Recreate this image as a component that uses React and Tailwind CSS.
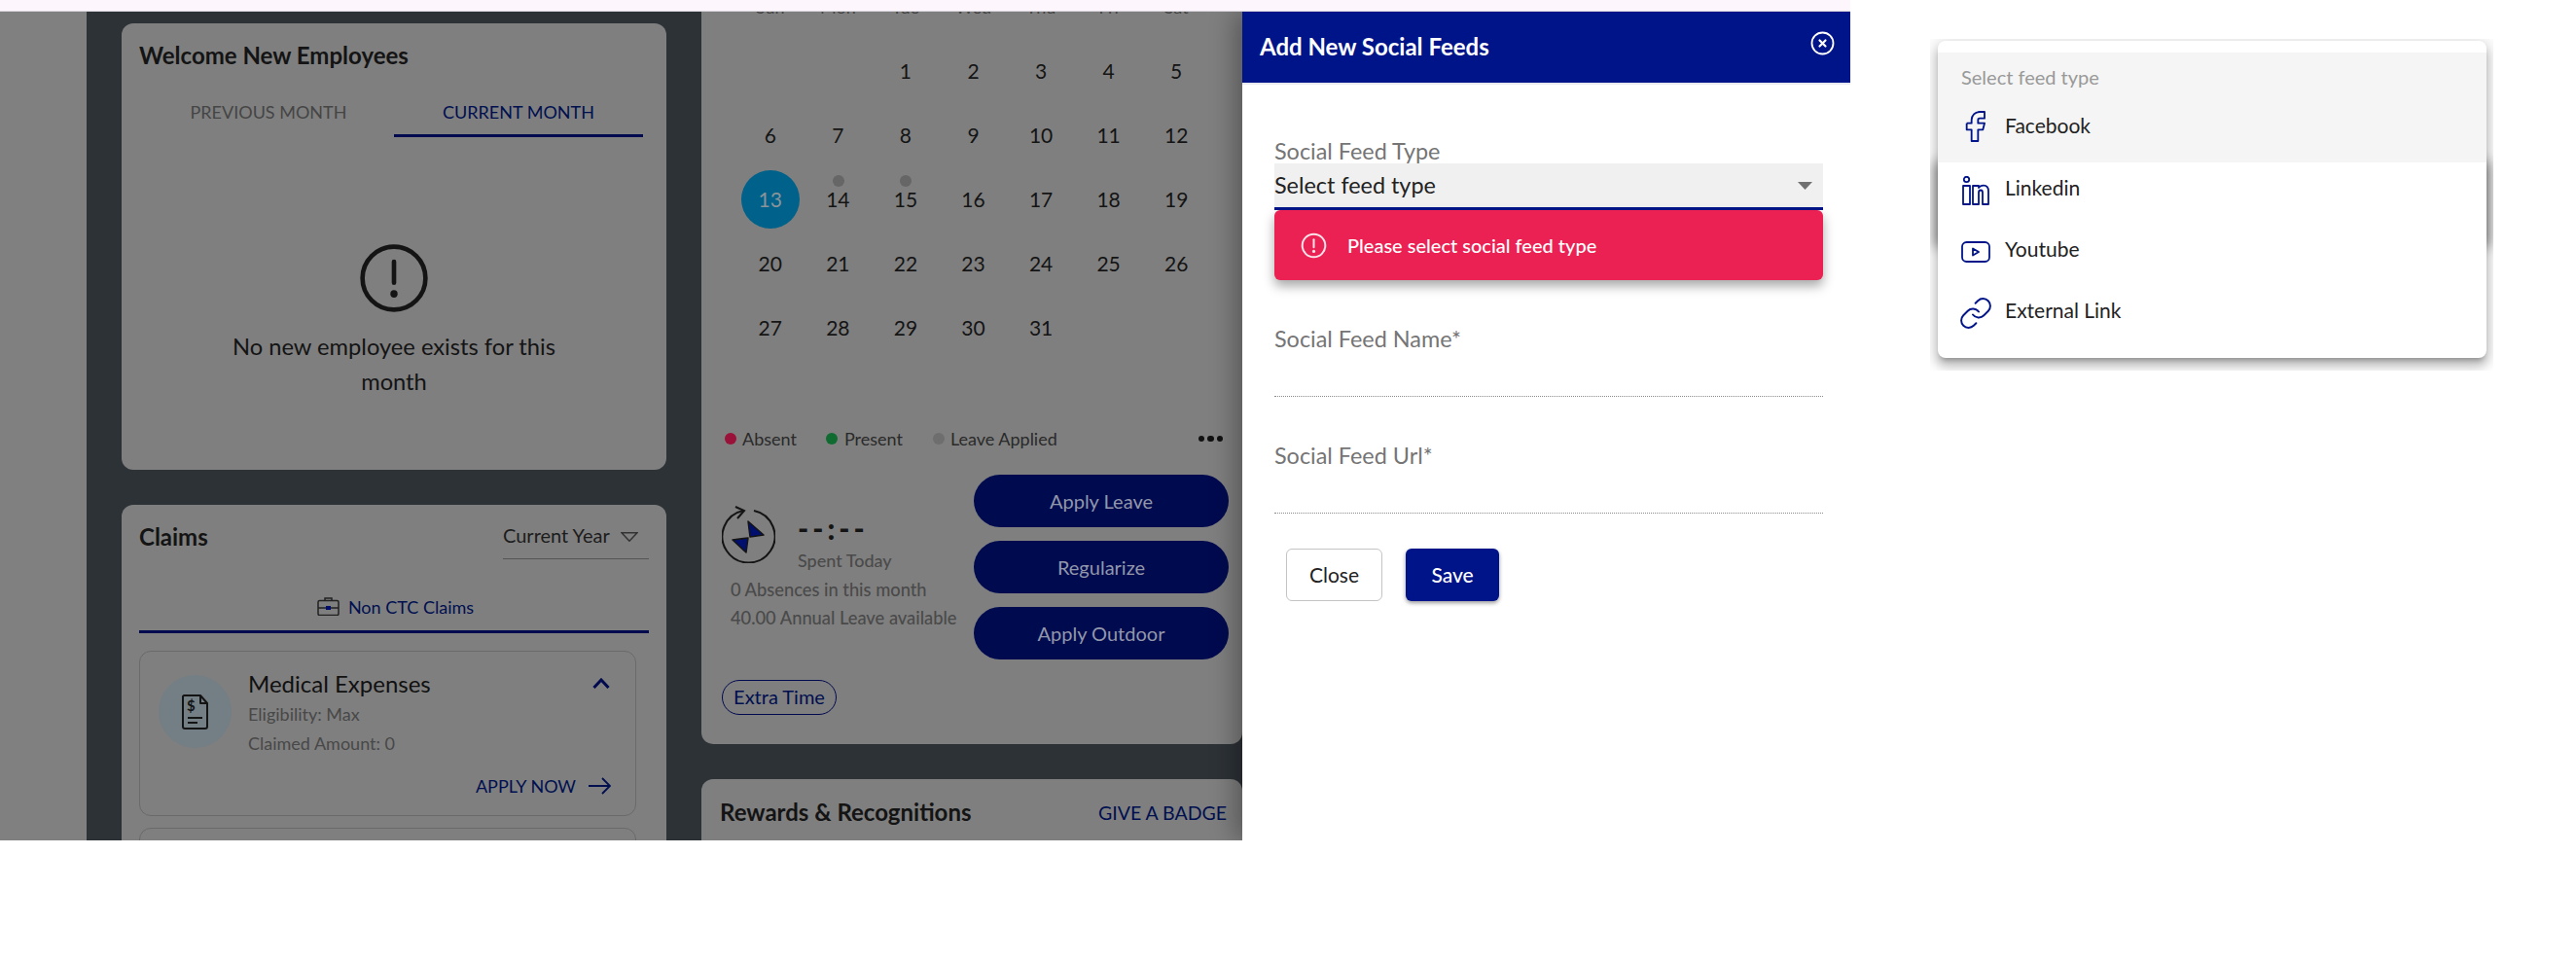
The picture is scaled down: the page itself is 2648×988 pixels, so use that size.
import React from 'react';

const weeks = [
  ['', '', '1', '2', '3', '4', '5'],
  ['6', '7', '8', '9', '10', '11', '12'],
  ['13', '14', '15', '16', '17', '18', '19'],
  ['20', '21', '22', '23', '24', '25', '26'],
  ['27', '28', '29', '30', '31', '', ''],
];
const dayNames = ['Sun', 'Mon', 'Tue', 'Wed', 'Thu', 'Fri', 'Sat'];

function AlertCircle({ className, strokeWidth = 2 }) {
  return (
    <svg className={className} viewBox="0 0 24 24" fill="none" stroke="currentColor" strokeWidth={strokeWidth} strokeLinecap="round">
      <circle cx="12" cy="12" r="10.5" />
      <path d="M12 6.5v7" />
      <path d="M12 17.2v.1" strokeWidth={strokeWidth * 1.6} />
    </svg>
  );
}

function SpentIcon() {
  return (
    <svg className="w-[55px] h-[59px] shrink-0" viewBox="0 0 55 59" fill="none" stroke="#141414" strokeWidth="2">
      <path d="M33 5A27 27 0 1 1 22 5" />
      <path d="M14 1l9 4-7 8" />
      <path d="M27 16l16 14-14 2zM11 35l14 13 2-15z" fill="#000f6e" strokeWidth="1.5" strokeLinejoin="round" />
    </svg>
  );
}

function DocIcon() {
  return (
    <svg className="w-[27px] h-[36px]" viewBox="0 0 27 36" fill="none" stroke="#141414" strokeWidth="2" strokeLinejoin="round">
      <path d="M2 1h17l7 8v24a2 2 0 0 1-2 2H3a2 2 0 0 1-2-2V2z" />
      <path d="M19 1v8h7" />
      <text x="5" y="17" fontFamily="Lato" fontSize="15" fontWeight="700" fill="#141414" stroke="none">$</text>
      <path d="M6 24h15M6 29h10" />
    </svg>
  );
}

function CaseIcon() {
  return (
    <svg className="w-[23px] h-[19px]" viewBox="0 0 23 19" fill="none" stroke="#222" strokeWidth="1.5">
      <rect x="1" y="3.5" width="21" height="15" rx="1.5" />
      <path d="M8 3.5V1h7v2.5M1 11h21" />
      <rect x="9" y="9" width="5" height="4" fill="#000f6e" stroke="none" />
    </svg>
  );
}

function FeedIcon({ type }) {
  if (type === 'facebook') {
    return (
      <svg className="w-[40px] h-[40px]" viewBox="0 0 24 24" fill="none" stroke="#001489" strokeWidth="1.1" strokeLinejoin="round">
        <path d="M7 10v4h3v7h4v-7h3l1-4h-4V8a1 1 0 0 1 1-1h3V3h-3a5 5 0 0 0-5 5v2H7" />
      </svg>
    );
  }
  if (type === 'linkedin') {
    return (
      <svg className="w-[28px] h-[30px]" viewBox="0 0 28 30" fill="none" stroke="#001489" strokeWidth="1.8" strokeLinejoin="round">
        <circle cx="4.5" cy="3.5" r="2.7" />
        <path d="M1 10h7v19H1zM11 10h6v2c1-1.500 3-2.300 5-2.300 3.500 0 5 2.500 5 6V29h-6V17c0-1.500-.7-2.500-2-2.500s-2 1-2 2.500v12h-6z" />
      </svg>
    );
  }
  if (type === 'youtube') {
    return (
      <svg className="w-[30px] h-[22px]" viewBox="0 0 30 22" fill="none" stroke="#001489" strokeWidth="1.8" strokeLinejoin="round">
        <rect x="1" y="1" width="28" height="20" rx="4.5" />
        <path d="M12 7.500v7l6-3.500z" />
      </svg>
    );
  }
  return (
    <svg className="w-[36px] h-[36px]" viewBox="0 0 24 24" fill="none" stroke="#001489" strokeWidth="1.3" strokeLinecap="round" strokeLinejoin="round">
      <path d="M10 13a5 5 0 0 0 7.540.540l3-3a5 5 0 0 0-7.070-7.070l-1.720 1.710" />
      <path d="M14 11a5 5 0 0 0-7.540-.540l-3 3a5 5 0 0 0 7.070 7.070l1.710-1.710" />
    </svg>
  );
}

function WelcomeCard() {
  return (
    <div className="h-[459px] rounded-xl bg-[#7f7f7f] pt-5 px-[18px]">
      <h2 className="text-[24px] leading-[26px] font-bold text-[#141414]">Welcome New Employees</h2>
      <div className="mt-[29px] flex pr-[6px]">
        <div className="w-[262px] h-[42px] pt-[1px] pl-[4px] text-center text-[18px] leading-[30px] text-[#454545]">PREVIOUS MONTH</div>
        <div className="w-[256px] h-[42px] pt-[1px] text-center text-[18px] leading-[30px] text-[#000f50] border-b-[3px] border-[#000a4f]">CURRENT MONTH</div>
      </div>
      <div className="flex flex-col items-center mt-[108px]">
        <AlertCircle className="w-[74px] h-[74px] text-[#141414]" strokeWidth={1.500} />
        <p className="mt-[15px] w-[400px] text-center text-[23.700px] leading-[36px] text-[#141414]">No new employee exists for this month</p>
      </div>
    </div>
  );
}

function ClaimsCard() {
  return (
    <div className="mt-[36px] h-[420px] rounded-xl bg-[#7f7f7f] pt-[18px] px-[18px]">
      <div className="flex justify-between h-[38px]">
        <h2 className="text-[24px] leading-[30px] font-bold text-[#141414]">Claims</h2>
        <div className="w-[150px] border-b border-[#555] flex gap-[11px] h-[38px]">
          <span className="text-[20px] leading-[26px] text-[#1c1c1c]">Current Year</span>
          <svg className="w-[18px] h-[10px] mt-[10px]" viewBox="0 0 18 10" fill="none" stroke="#333" strokeWidth="1.5"><path d="M1 .800h16L9 9.200z" /></svg>
        </div>
      </div>
      <div className="mt-[36px] w-[524px] h-[40px] pt-[3px] pl-[3px] flex justify-center gap-[9px] border-b-[3px] border-[#000a4f]">
        <CaseIcon />
        <span className="text-[18px] leading-[20px] text-[#000f50]">Non CTC Claims</span>
      </div>
      <div className="mt-[18px] w-[511px] h-[170px] rounded-xl border border-[#6a6a6a] pt-[24px] pl-[19px] pr-[26px] relative">
        <div className="flex">
          <div className="w-[75px] h-[75px] rounded-full bg-[#747f85] flex items-center justify-center shrink-0">
            <DocIcon />
          </div>
          <div className="ml-[17px] -mt-[6px]">
            <div className="text-[24px] leading-[30px] text-[#111]">Medical Expenses</div>
            <div className="mt-[1px] text-[18px] leading-[30px] text-[#484848]">Eligibility: Max</div>
            <div className="text-[18px] leading-[30px] text-[#484848]">Claimed Amount: 0</div>
          </div>
          <svg className="w-[18px] h-[11px] ml-auto mt-[3px]" viewBox="0 0 18 11" fill="none" stroke="#000a4f" strokeWidth="3"><path d="M1.500 10L9 2l7.500 8" /></svg>
        </div>
        <div className="absolute right-[25px] bottom-[20px] flex items-center gap-[13px]">
          <span className="text-[18px] leading-[20px] text-[#000f50]">APPLY NOW</span>
          <svg className="w-[23px] h-[18px]" viewBox="0 0 23 18" fill="none" stroke="#000f50" strokeWidth="1.800"><path d="M0 9h22M14 1l8 8-8 8" /></svg>
        </div>
      </div>
      <div className="mt-[12px] w-[511px] h-[40px] rounded-xl border border-[#6a6a6a]" />
    </div>
  );
}

function CalendarCard() {
  return (
    <div className="-mt-[60px] h-[813px] rounded-xl bg-[#7f7f7f] pt-[22px]">
      <div className="pl-[36px] w-[523px] grid grid-cols-7">
        {dayNames.map((d) => (
          <div key={d} className="h-[66px] pt-[20px] text-center text-[18px] leading-[26px] text-[#454545]">{d}</div>
        ))}
        {weeks.flat().map((d, i) => (
          <div key={i} className="h-[66px] relative flex items-center justify-center text-[21px] text-[#141414]">
            {d === '13' ? (
              <span className="w-[60px] h-[60px] rounded-full bg-[#00628a] flex items-center justify-center text-[#8a949a]">{d}</span>
            ) : d}
            {(d === '14' || d === '15') && <span className="absolute top-[8px] left-[29px] w-[12px] h-[12px] rounded-full bg-[#666]" />}
          </div>
        ))}
      </div>
      <div className="mt-[69px] flex items-center h-6 pl-[24px] pr-[20px] text-[18px] text-[#2a2a2a]">
        <span className="w-3 h-3 rounded-full bg-[#9a1239]" />
        <span className="ml-[6px]">Absent</span>
        <span className="ml-[30px] w-3 h-3 rounded-full bg-[#0f6b30]" />
        <span className="ml-[7px]">Present</span>
        <span className="ml-[31px] w-3 h-3 rounded-full bg-[#6e6e6e]" />
        <span className="ml-[6px]">Leave Applied</span>
        <span className="ml-auto flex gap-[3px]">
          <i className="w-[6.500px] h-[6.500px] rounded-full bg-[#111]" />
          <i className="w-[6.500px] h-[6.500px] rounded-full bg-[#111]" />
          <i className="w-[6.500px] h-[6.500px] rounded-full bg-[#111]" />
        </span>
      </div>
      <div className="mt-[25px] flex pl-[21px]">
        <div className="w-[259px] pt-[32px]">
          <div className="flex">
            <SpentIcon />
            <div className="ml-[23px] mt-[3px]">
              <div className="text-[30px] leading-[40px] font-black tracking-[4px] text-[#141414]">--:--</div>
              <div className="-mt-[2px] text-[18px] leading-[30px] font-medium text-[#4a4a4a]">Spent Today</div>
            </div>
          </div>
          <div className="pl-[9px] text-[18.300px] leading-[29px] font-medium text-[#4a4a4a] whitespace-nowrap">
            <div className="mt-[1px]">0 Absences in this month</div>
            <div>40.00 Annual Leave available</div>
          </div>
        </div>
        <div className="w-[262px] flex flex-col gap-[14px]">
          {['Apply Leave', 'Regularize', 'Apply Outdoor'].map((b) => (
            <button key={b} className="h-[54px] pb-[1px] rounded-full bg-[#000a4f] text-[20px] text-[#9297ab]">{b}</button>
          ))}
        </div>
      </div>
      <div className="mt-[21px] ml-[21px] w-[118px] h-[36px] pb-[2px] rounded-full border border-[#000a4f] flex items-center justify-center text-[20px] text-[#000f50]">Extra Time</div>
    </div>
  );
}

function LeftPage() {
  return (
    <div className="w-[1277px] h-[852px] shrink-0 flex overflow-hidden bg-[#2d3237]">
      <div className="w-[89px] bg-[#808080] shrink-0" />
      <div className="pl-[36px] pr-[36px] pt-[12px] w-[632px] shrink-0">
        <WelcomeCard />
        <ClaimsCard />
      </div>
      <div className="w-[556px] shrink-0">
        <CalendarCard />
        <div className="mt-[36px] h-[120px] rounded-xl bg-[#7f7f7f] flex justify-between items-start pt-[18px] pl-[19px] pr-[16px]">
          <h2 className="text-[24px] leading-[32px] font-bold text-[#141414]">Rewards &amp; Recognitions</h2>
          <span className="text-[19.500px] leading-[34px] text-[#000f50]">GIVE A BADGE</span>
        </div>
      </div>
    </div>
  );
}

function Field({ label }) {
  return (
    <div className="mt-[48px]">
      <div className="text-[23.400px] leading-[24px] text-[#757575]">{label}</div>
      <div className="h-[48px] border-b border-dotted border-[#8a8a8a]" />
    </div>
  );
}

function FeedModal() {
  return (
    <div className="w-[625px] h-[852px] bg-white shadow-[-8px_0_24px_rgba(0,0,0,0.3)] relative">
      <div className="h-[73px] bg-[#001489] flex justify-between pl-[18px] pr-[16px] pt-[24px]">
        <h2 className="text-[24px] leading-[24px] font-bold text-white">Add New Social Feeds</h2>
        <svg className="w-[25px] h-[25px] -mt-[4px]" viewBox="0 0 25 25" fill="none" stroke="#fff" strokeWidth="1.800" strokeLinecap="round">
          <circle cx="12.500" cy="12.500" r="11" />
          <path d="M9.500 9.500l6 6M15.500 9.500l-6 6" strokeWidth="2.200" />
        </svg>
      </div>
      <div className="h-[2px] bg-[#e8e8f0]" />
      <div className="pt-[57px] pl-[33px] pr-[28px]">
        <div className="h-[24px] text-[23.400px] leading-[23px] text-[#757575]">Social Feed Type</div>
        <div className="h-[48px] bg-[#f0f0f0] border-b-[3px] border-[#001489] flex items-center justify-between pr-[11px]">
          <span className="text-[23.400px] text-[#222]">Select feed type</span>
          <svg className="w-[15px] h-[8px]" viewBox="0 0 15 8"><path d="M0 0h15L7.500 8z" fill="#707070" /></svg>
        </div>
        <div className="h-[72px] rounded-md bg-[#eb2053] shadow-[0_6px_12px_rgba(0,0,0,0.35)] flex items-center pl-[27px] gap-[21px]">
          <AlertCircle className="w-[27px] h-[27px] text-[#fbe3ea]" strokeWidth={1.800} />
          <span className="text-[20px] font-medium text-white">Please select social feed type</span>
        </div>
        <Field label="Social Feed Name*" />
        <Field label="Social Feed Url*" />
        <div className="mt-[36px] pl-[12px] flex gap-[24px]">
          <button className="w-[99px] h-[54px] rounded-md border border-[#c4c4c4] text-[21px] text-[#222]">Close</button>
          <button className="w-[96px] h-[54px] rounded-md bg-[#001489] shadow-[0_2px_4px_rgba(0,0,0,0.4)] text-[21px] font-medium text-white">Save</button>
        </div>
      </div>
    </div>
  );
}

function FeedMenu() {
  const items = [
    { type: 'linkedin', name: 'Linkedin', rowClass: 'pl-[25px] gap-[16px]' },
    { type: 'youtube', name: 'Youtube', rowClass: 'pl-[24px] gap-[15px]' },
    { type: 'link', name: 'External Link', rowClass: 'pl-[21px] gap-[12px]' },
  ];
  return (
    <div className="w-[579px] h-[341px] overflow-hidden pl-[8px] pt-[2px] relative">
      {/* darker band of shadow that shows either side of the menu */}
      <div className="absolute left-[8px] top-[130px] w-[564px] h-[80px] shadow-[0_0_12px_4px_rgba(0,0,0,0.4)]" />
      <div className="relative w-[564px] h-[326px] rounded-lg bg-white shadow-[0_5px_5px_-3px_rgba(0,0,0,0.25),0_8px_10px_1px_rgba(0,0,0,0.16),0_3px_16px_4px_rgba(0,0,0,0.14)] pt-[12px]">
        <div className="h-[113px] bg-[#f5f5f5] pt-[11px]">
          <div className="pl-[24px] text-[20px] leading-[28px] text-[#999]">Select feed type</div>
          <div className="h-[68px] mt-[3px] flex items-center pl-[18px] gap-[11px] text-[21px] text-[#222]">
            <FeedIcon type="facebook" />
            <span className="mb-[2px]">Facebook</span>
          </div>
        </div>
        <div className="-mt-[3px] relative">
          {items.map((it) => (
            <div key={it.type} className={`h-[63px] flex items-center text-[21px] text-[#222] ${it.rowClass}`}>
              <FeedIcon type={it.type} />
              <span className="mb-[6px]">{it.name}</span>
            </div>
          ))}
        </div>
      </div>
    </div>
  );
}

export default function App() {
  return (
    <div className="w-[2648px] h-[988px] bg-white flex overflow-hidden font-[Lato,sans-serif]">
      <div className="w-[1902px] shrink-0">
        <div className="h-[12px] bg-[#fdf6fd] border-b border-[#d8d4dc]" />
        <div className="flex h-[852px] overflow-hidden">
          <LeftPage />
          <FeedModal />
        </div>
      </div>
      <div className="pl-[82px] pt-[40px]">
        <FeedMenu />
      </div>
    </div>
  );
}
